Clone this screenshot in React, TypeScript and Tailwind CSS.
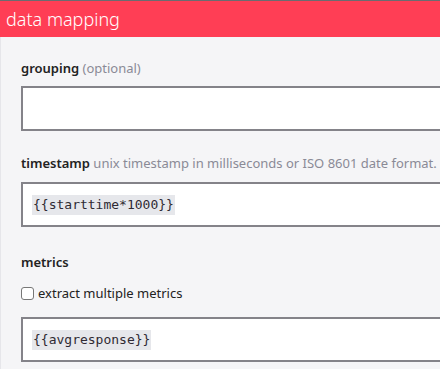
export default function App() {
  return (
    <div className="w-[440px] h-[369px] overflow-hidden bg-[#f5f5f7] border-t border-[#6b6b70] flex flex-col font-['Noto_Sans',sans-serif]">
      <div className="h-[36px] shrink-0 bg-[#ff3e55] pl-[6px] flex items-center text-white text-[18px] font-light">
        data mapping
      </div>
      <div className="flex-1 border-l border-[#e6e6ea] pl-[20px] w-[600px]">
        <div className="pt-[22px] text-[13px] text-[#222] leading-[18px]">
          <span className="font-semibold">grouping</span>{' '}
          <span className="text-[#8a8a96]">(optional)</span>
        </div>
        <div className="mt-[9px] h-[45px] bg-white border-2 border-[#848389]" />

        <div className="pt-[23px] text-[13px] text-[#222] leading-[18px] whitespace-nowrap">
          <span className="font-semibold">timestamp</span>{' '}
          <span className="text-[#8a8a96]">unix timestamp in milliseconds or ISO 8601 date format.</span>
        </div>
        <div className="mt-[10px] h-[45px] bg-white border-2 border-[#848389] flex items-center pl-[9px]">
          <span className="bg-[#e6e7eb] text-[#2f2a33] text-[13px] font-['DejaVu_Sans_Mono',monospace] leading-[20px] px-[1px]">
            {'{{starttime*1000}}'}
          </span>
        </div>

        <div className="pt-[26px] text-[13px] text-[#222] leading-[18px] font-semibold">metrics</div>
        <label className="mt-[13px] flex items-center gap-[4px] text-[13px] text-[#222] leading-[18px]">
          <span className="w-[13px] h-[13px] rounded-[3px] border border-[#777] bg-white" />
          extract multiple metrics
        </label>
        <div className="mt-[15px] h-[45px] bg-white border-2 border-[#848389] flex items-center pl-[9px]">
          <span className="bg-[#e6e7eb] text-[#2f2a33] text-[13px] font-['DejaVu_Sans_Mono',monospace] leading-[20px] px-[1px]">
            {'{{avgresponse}}'}
          </span>
        </div>
      </div>
    </div>
  );
}
